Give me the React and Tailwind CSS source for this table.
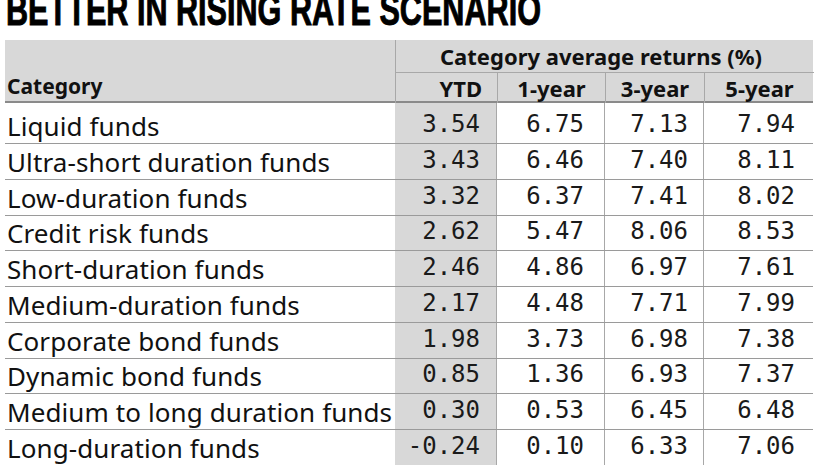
import React from 'react';

// Category returns table, newspaper-graphic style.
const ROWS = [
  ['Liquid funds', '3.54', '6.75', '7.13', '7.94'],
  ['Ultra-short duration funds', '3.43', '6.46', '7.40', '8.11'],
  ['Low-duration funds', '3.32', '6.37', '7.41', '8.02'],
  ['Credit risk funds', '2.62', '5.47', '8.06', '8.53'],
  ['Short-duration funds', '2.46', '4.86', '6.97', '7.61'],
  ['Medium-duration funds', '2.17', '4.48', '7.71', '7.99'],
  ['Corporate bond funds', '1.98', '3.73', '6.98', '7.38'],
  ['Dynamic bond funds', '0.85', '1.36', '6.93', '7.37'],
  ['Medium to long duration funds', '0.30', '0.53', '6.45', '6.48'],
  ['Long-duration funds', '-0.24', '0.10', '6.33', '7.06'],
];

const COLS = 'grid grid-cols-[390px_101px_108px_99px_110px]';
const NUM = "font-['DejaVu_Sans_Mono',monospace] text-[24px] leading-none text-[#1a1a1a] flex items-end justify-end";

export default function App() {
  return (
    <div className="h-[465px] w-[826px] overflow-hidden bg-white font-['Noto_Sans',sans-serif]">
      <div className="-mt-[13px] h-[53px] whitespace-nowrap pl-[6px]">
        <div className="inline-block origin-left scale-x-[0.68] font-['Liberation_Sans',sans-serif] text-[45px] font-bold leading-[45px] text-black [-webkit-text-stroke:1px_black]">
          BETTER IN RISING RATE SCENARIO
        </div>
      </div>

      <div className="ml-[5px] w-[808px]">
        {/* header */}
        <div className={`${COLS} h-[63px] border-b-2 border-[#8a8a8a] bg-[#d8d8d8]`}>
          <div className="flex items-end pb-[6px] pl-[2px] text-[21px] font-bold leading-none text-[#111]">Category</div>
          <div className="col-span-4 grid grid-rows-[33px_30px] border-l border-[#a8a8a8]">
            <div className="flex items-center justify-center border-b border-[#a8a8a8] pr-[8px] text-[22px] font-bold leading-none text-[#111]">
              Category average returns (%)
            </div>
            <div className="grid grid-cols-[101px_108px_99px_110px] text-[22px] font-bold leading-none text-[#111]">
              <div className="flex items-center justify-end pr-[15px]">YTD</div>
              <div className="flex items-center justify-center border-l border-[#a8a8a8]">1-year</div>
              <div className="flex items-center justify-center border-l border-[#a8a8a8]">3-year</div>
              <div className="flex items-center justify-center border-l border-[#a8a8a8]">5-year</div>
            </div>
          </div>
        </div>

        {/* rows */}
        {ROWS.map((r, i) => (
          <div
            key={r[0]}
            className={`${COLS} border-b border-[#9a9a9a] ${i === 0 ? 'h-[41px]' : 'h-[35.75px]'}`}
          >
            <div className="flex items-end whitespace-nowrap pb-[4px] pl-[2px] text-[26px] leading-none tracking-[0.1px] text-[#111]">{r[0]}</div>
            <div className={`${NUM} bg-[#d8d8d8] pb-[7px] pr-[16px]`}>{r[1]}</div>
            <div className={`${NUM} border-l border-[#a8a8a8] pb-[7px] pr-[20px]`}>{r[2]}</div>
            <div className={`${NUM} border-l border-[#a8a8a8] pb-[7px] pr-[15px]`}>{r[3]}</div>
            <div className={`${NUM} border-l border-[#a8a8a8] pb-[7px] pr-[18px]`}>{r[4]}</div>
          </div>
        ))}
      </div>
    </div>
  );
}
